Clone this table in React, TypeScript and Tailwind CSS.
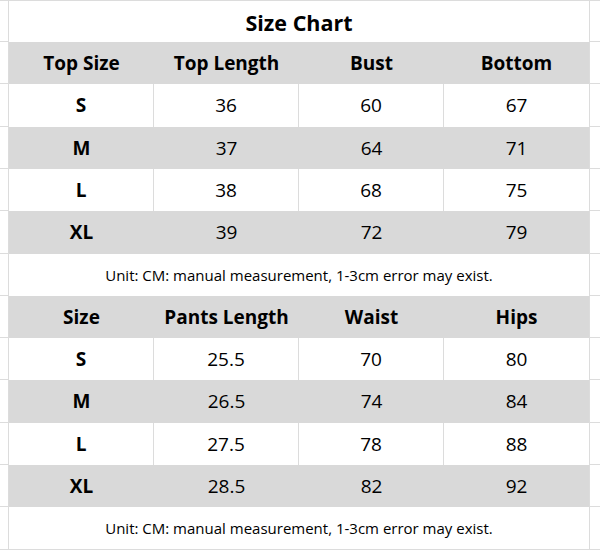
import React from "react";

const line = "border-[#dcdcdc]";

type Tone = "grey" | "white";

function Gutter({ side }: { side: "left" | "right" }) {
    return side === "left" ? (
        <div className={`w-[9px] shrink-0 border-r border-b ${line}`} />
    ) : (
        <div className={`w-[11px] shrink-0 border-l border-b ${line}`} />
    );
}

function Row({
    cells,
    tone,
    h,
    head,
}: {
    cells: string[];
    tone: Tone;
    h: string;
    head?: boolean;
}) {
    return (
        <div className={`flex ${h}`}>
            <Gutter side="left" />
            {cells.map((c, i) => (
                <div
                    key={i}
                    className={`flex w-[145px] items-center justify-center ${
                        tone === "grey"
                            ? "bg-[#d9d9d9]"
                            : i < 3
                            ? `border-r ${line}`
                            : ""
                    } ${head || i === 0 ? "font-bold" : ""} text-[19px]`}
                >
                    {c}
                </div>
            ))}
            <Gutter side="right" />
        </div>
    );
}

function Merged({
    text,
    h,
    title,
    last,
}: {
    text: string;
    h: string;
    title?: boolean;
    last?: boolean;
}) {
    return (
        <div className={`flex ${h}`}>
            <Gutter side="left" />
            <div
                className={`flex w-[580px] items-center justify-center ${
                    last ? `border-b ${line}` : ""
                } ${title ? "pt-[3px] text-[21.5px] font-bold" : "text-[15px]"}`}
            >
                {text}
            </div>
            <Gutter side="right" />
        </div>
    );
}

const tops = [
    ["S", "36", "60", "67"],
    ["M", "37", "64", "71"],
    ["L", "38", "68", "75"],
    ["XL", "39", "72", "79"],
];

const pants = [
    ["S", "25.5", "70", "80"],
    ["M", "26.5", "74", "84"],
    ["L", "27.5", "78", "88"],
    ["XL", "28.5", "82", "92"],
];

const note = "Unit: CM: manual measurement, 1-3cm error may exist.";

export default function App() {
    return (
        <div
            className={`h-[552px] w-[600px] overflow-hidden border-t bg-white text-black ${line}`}
            style={{ fontFamily: '"Open Sans", "Noto Sans", sans-serif' }}
        >
            <Merged text="Size Chart" h="h-[41px]" title />
            <Row cells={["Top Size", "Top Length", "Bust", "Bottom"]} tone="grey" h="h-[42px]" head />
            <Row cells={tops[0]} tone="white" h="h-[43px]" />
            <Row cells={tops[1]} tone="grey" h="h-[42px]" />
            <Row cells={tops[2]} tone="white" h="h-[42px]" />
            <Row cells={tops[3]} tone="grey" h="h-[43px]" />
            <Merged text={note} h="h-[42px]" />
            <Row cells={["Size", "Pants Length", "Waist", "Hips"]} tone="grey" h="h-[42px]" head />
            <Row cells={pants[0]} tone="white" h="h-[42px]" />
            <Row cells={pants[1]} tone="grey" h="h-[43px]" />
            <Row cells={pants[2]} tone="white" h="h-[42px]" />
            <Row cells={pants[3]} tone="grey" h="h-[42px]" />
            <Merged text={note} h="h-[43px]" last />
        </div>
    );
}
